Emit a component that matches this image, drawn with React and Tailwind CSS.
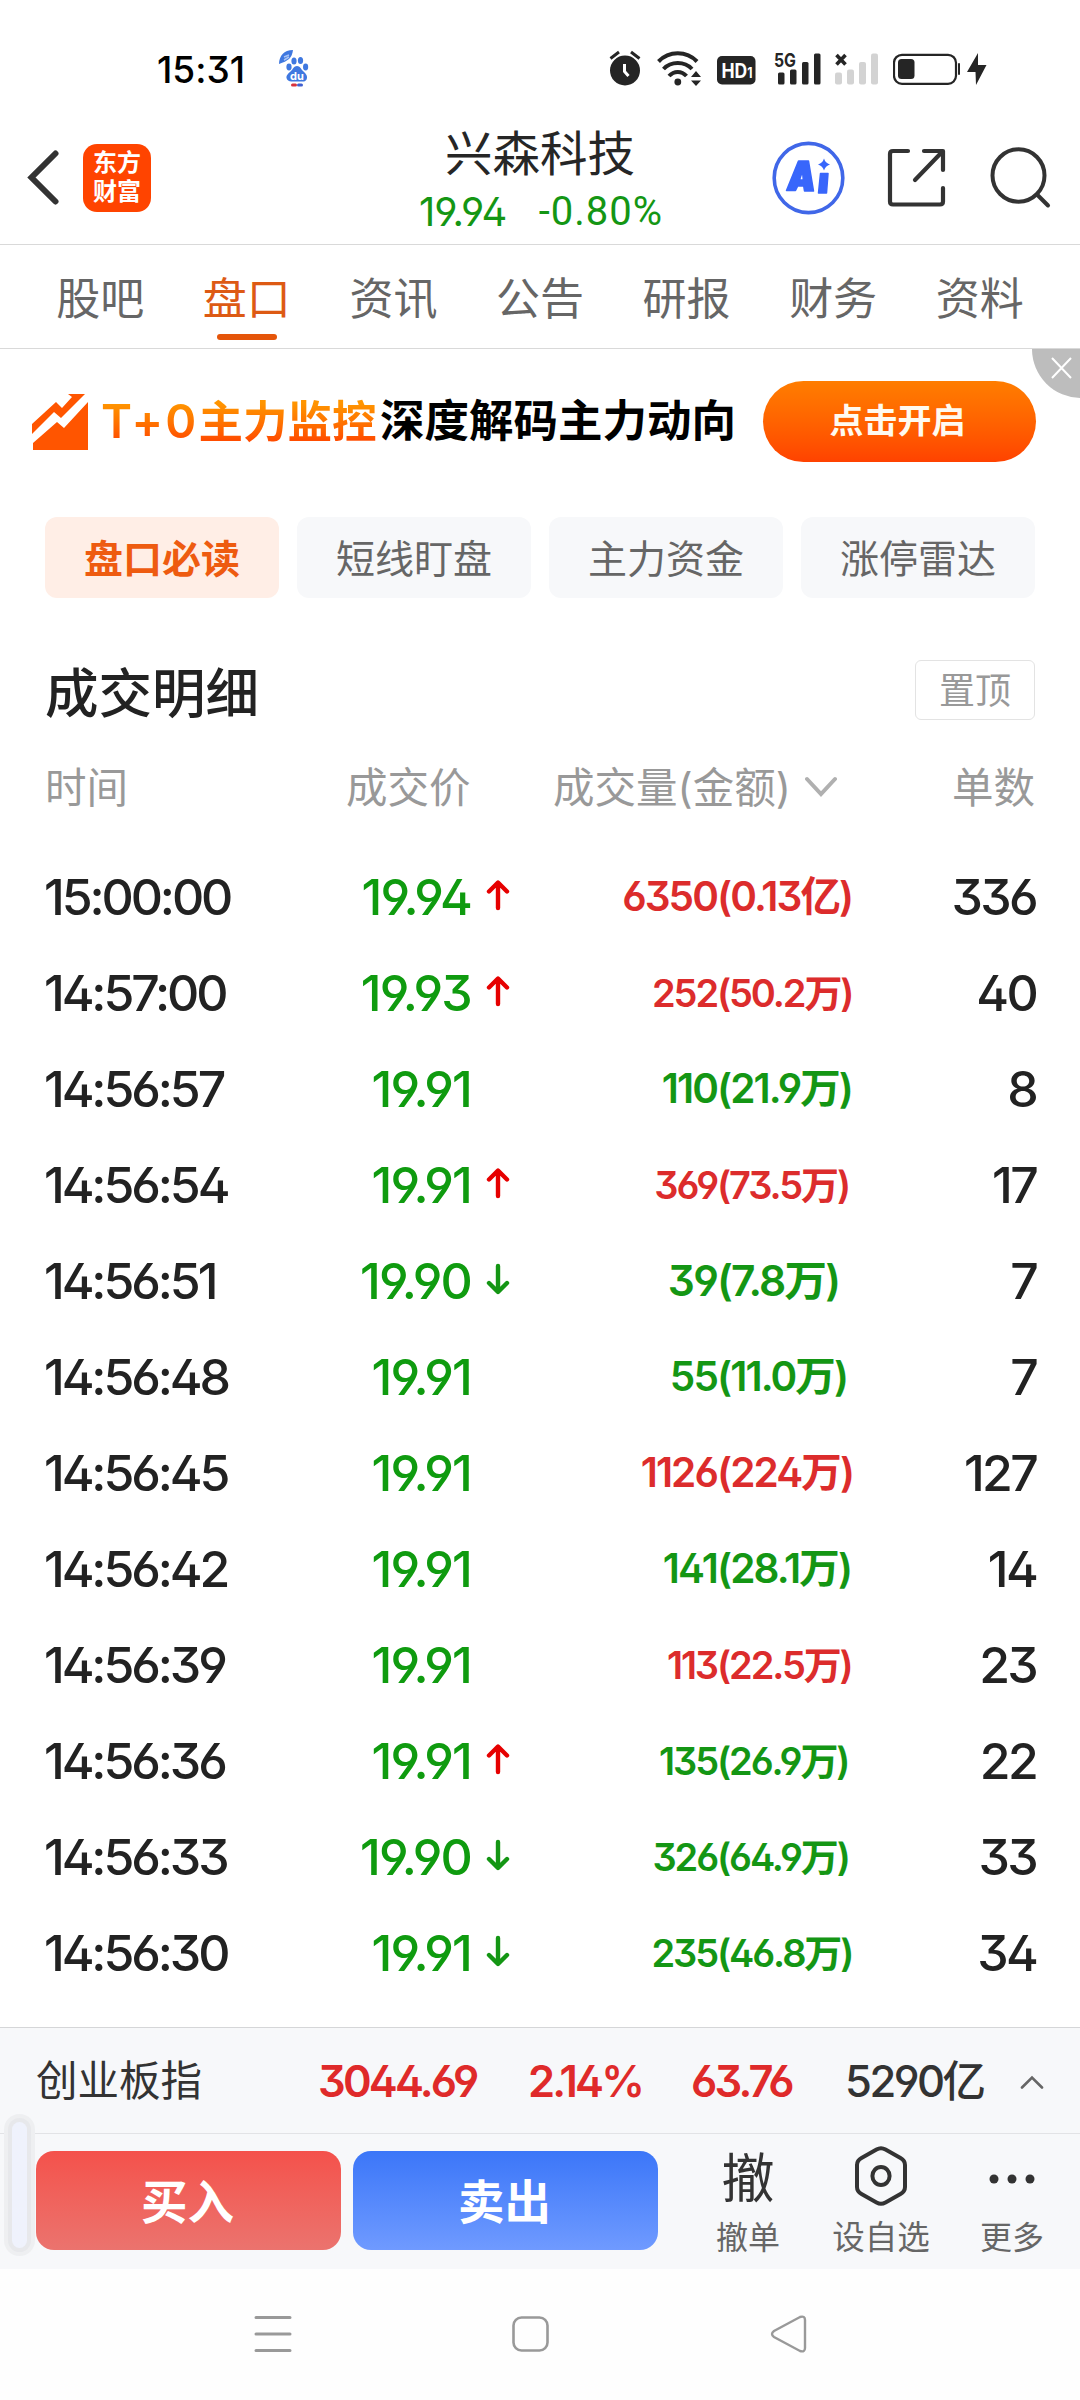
import React, { useState } from 'react';

const tabs = ['股吧', '盘口', '资讯', '公告', '研报', '财务', '资料'];

const pills = ['盘口必读', '短线盯盘', '主力资金', '涨停雷达'];

const trades = [
  { time: '15:00:00', price: '19.94', dir: 'up', volume: '6350', amount: '(0.13亿)', size: 'md', side: 'buy', count: 336 },
  { time: '14:57:00', price: '19.93', dir: 'up', volume: '252', amount: '(50.2万)', size: 'sm', side: 'buy', count: 40 },
  { time: '14:56:57', price: '19.91', dir: '', volume: '110', amount: '(21.9万)', size: 'md', side: 'sell', count: 8 },
  { time: '14:56:54', price: '19.91', dir: 'up', volume: '369', amount: '(73.5万)', size: 'sm', side: 'buy', count: 17 },
  { time: '14:56:51', price: '19.90', dir: 'down', volume: '39', amount: '(7.8万)', size: 'lg', side: 'sell', count: 7 },
  { time: '14:56:48', price: '19.91', dir: '', volume: '55', amount: '(11.0万)', size: 'md', side: 'sell', count: 7 },
  { time: '14:56:45', price: '19.91', dir: '', volume: '1126', amount: '(224万)', size: 'md', side: 'buy', count: 127 },
  { time: '14:56:42', price: '19.91', dir: '', volume: '141', amount: '(28.1万)', size: 'md', side: 'sell', count: 14 },
  { time: '14:56:39', price: '19.91', dir: '', volume: '113', amount: '(22.5万)', size: 'sm', side: 'buy', count: 23 },
  { time: '14:56:36', price: '19.91', dir: 'up', volume: '135', amount: '(26.9万)', size: 'sm', side: 'sell', count: 22 },
  { time: '14:56:33', price: '19.90', dir: 'down', volume: '326', amount: '(64.9万)', size: 'sm', side: 'sell', count: 33 },
  { time: '14:56:30', price: '19.91', dir: 'down', volume: '235', amount: '(46.8万)', size: 'sm', side: 'sell', count: 34 }
];

const volumeSizes = {
  sm: 'text-[38px] tracking-[-2.1px]',
  md: 'text-[40.500px] tracking-[-1.9px]',
  lg: 'text-[42.500px] tracking-[-1.8px]'
};

const StatusBar = () => (
  <div className="h-[110px] pt-[49px] flex items-start">
    <span className="ml-[157px] w-[122px] text-[37px] leading-[42px] font-medium text-black">15:31</span>
    <svg width="30" height="40" viewBox="0 0 30 40" className="shrink-0">
      <path d="M0 15C0 7 5 1 14 1C13 9 9 12 0 15Z" fill="#3f78e0" />
      <path d="M5 8l5-2M5 11l5-3" stroke="#a9c4f5" strokeWidth="1.5" />
      <ellipse cx="15" cy="12" rx="2.6" ry="3.6" fill="#3f78e0" />
      <ellipse cx="21.5" cy="11.5" rx="2.6" ry="3.6" fill="#3f78e0" />
      <ellipse cx="10" cy="18" rx="2.6" ry="3.4" fill="#3f78e0" />
      <ellipse cx="26.6" cy="18" rx="2.6" ry="3.4" fill="#3f78e0" />
      <path d="M18 17c3 0 4 3 6 5s4.500 4 4 7c-.5 3-3 4-5.500 3.500h-9c-3 .5-5.500-1-6-3.500c-.5-3 2.500-5 4.500-7s3-5 6-5z" fill="#3f78e0" />
      <text x="18" y="30.500" fontSize="11" fontWeight="700" textAnchor="middle" fill="#fff">du</text>
      <rect x="12" y="34.500" width="6" height="3" rx="1.500" fill="#d8333d" />
      <rect x="18" y="34.500" width="6" height="3" rx="1.500" fill="#3f5fd0" />
    </svg>
    <div className="ml-[300px] flex items-start text-[#252525]">
      {/* alarm */}
      <svg width="34" height="40" viewBox="0 0 34 40" fill="currentColor">
        <circle cx="16" cy="21.500" r="15" />
        <path d="M1.500 9.500l8.500-6.500M30.500 9.500l-8.500-6.500" stroke="currentColor" strokeWidth="3" />
        <path d="M15.500 15v7.500l4 4.500" stroke="#fff" strokeWidth="3" fill="none" />
      </svg>
      {/* wifi */}
      <svg width="46" height="40" viewBox="0 0 46 40" className="ml-[14px]" fill="none" stroke="currentColor" strokeWidth="4">
        <path d="M1.500 12.500C12 1.500 29.500 1.500 40 12.500" />
        <path d="M6.500 20C14 12 27.500 12 35 20" />
        <path d="M12 27C17 21.500 24.500 21.500 29.500 27" />
        <circle cx="20.800" cy="33" r="3.400" fill="currentColor" stroke="none" />
        <path d="M34 28l5-6 5 6zM34 31.500l5 5.500 5-5.500z" fill="currentColor" stroke="none" />
      </svg>
      {/* HD */}
      <svg width="39" height="40" viewBox="0 0 39 40" className="ml-[14px]">
        <rect x="0" y="7" width="38.500" height="28.500" rx="5" fill="currentColor" />
        <text x="4.500" y="28.500" fontSize="20" fontWeight="700" textLength="31" lengthAdjust="spacingAndGlyphs" fill="#fff">HD<tspan fontSize="14">1</tspan></text>
      </svg>
      {/* 5G signal */}
      <svg width="48" height="40" viewBox="0 0 48 40" className="ml-[18px]" fill="currentColor">
        <text x="0" y="17.500" fontSize="19" fontWeight="700" textLength="22" lengthAdjust="spacingAndGlyphs">5G</text>
        <rect x="4" y="23.500" width="6.500" height="12" rx="1.500" />
        <rect x="16" y="20.500" width="6.500" height="15" rx="1.500" />
        <rect x="28" y="13" width="6.500" height="22.500" rx="1.500" />
        <rect x="40" y="4.500" width="6.500" height="31" rx="1.500" />
      </svg>
      {/* no sim signal */}
      <svg width="44" height="40" viewBox="0 0 44 40" className="ml-[13px]" fill="#d3d3d3">
        <path d="M1.500 6l9 9.500M10.500 6l-9 9.500" stroke="#252525" strokeWidth="3.600" />
        <rect x="0" y="23.500" width="7" height="12" rx="2" />
        <rect x="12" y="20.500" width="7" height="15" rx="2" />
        <rect x="24" y="13" width="7" height="22.500" rx="2" />
        <rect x="36" y="4.500" width="7" height="31" rx="2" />
      </svg>
      {/* battery */}
      <svg width="68" height="40" viewBox="0 0 68 40" className="ml-[14px]" fill="currentColor">
        <rect x="1" y="5.800" width="62" height="29" rx="8" fill="none" stroke="currentColor" strokeWidth="2.200" />
        <rect x="5" y="10" width="16.500" height="20" rx="3.500" />
        <rect x="65" y="14" width="2" height="12" rx="1" />
      </svg>
      <svg width="20" height="40" viewBox="0 0 20 40" className="ml-[6px]" fill="currentColor">
        <path d="M11 4L0 23h8.500L9 36L19.500 16H11z" />
      </svg>
    </div>
  </div>
);

const Header = () => (
  <div className="h-[135px] border-b border-[#d9d9d9] flex items-start">
    <svg width="32" height="58" viewBox="0 0 32 58" className="ml-[27px] mt-[38px]" fill="none" stroke="#333" strokeWidth="6" strokeLinecap="round" strokeLinejoin="miter">
      <path d="M28.500 5.500L4.500 29.500L28.500 53.500" />
    </svg>
    <div className="ml-[24px] mt-[34px] w-[68px] h-[68px] rounded-[14px] bg-[#ff4400] text-white text-[24px] leading-[29px] font-bold text-center pt-[4px]">
      东方<br />财富
    </div>
    <div className="ml-[257px] w-[264px] flex flex-col items-center">
      <div className="mt-[9px] text-[47.500px] leading-[70px] text-[#262626] whitespace-nowrap">兴森科技</div>
      <div className="mt-[-1px] w-full pl-[11px] flex justify-between text-[40px] leading-[48px] tracking-[-1px] text-[#149614]">
        <span>19.94</span>
        <span className="mr-[9px] font-[Roboto] tracking-[1px]">-0.80%</span>
      </div>
    </div>
    <svg width="73" height="76" viewBox="0 0 73 76" className="ml-[100px] mt-[30px]" fill="#3866fb">
      <ellipse cx="36.500" cy="38" rx="34.300" ry="34.600" fill="none" stroke="#4067e8" strokeWidth="3.600" />
      <path d="M26.500 21h10l5 30h-9l-.8-5h-6l-2.200 4.500h-9zM30.500 31l-3 9h3.800z" fillRule="evenodd" stroke="#3866fb" strokeWidth="1.500" strokeLinejoin="round" />
      <path d="M48.500 33.500h7.500l-1.500 19.500h-8z" stroke="#3866fb" strokeWidth="1.500" strokeLinejoin="round" />
      <path d="M52 18.500q1.300 4.500 6 6q-4.700 1.500-6 6q-1.300-4.500-6-6q4.700-1.500 6-6z" />
    </svg>
    <svg width="60" height="62" viewBox="0 0 60 62" className="ml-[42px] mt-[37px]" fill="none" stroke="#333" strokeWidth="4.200" strokeLinecap="round" strokeLinejoin="round">
      <path d="M21 4H6Q3 4 3 7V54.500Q3 57.500 6 57.500H53Q56 57.500 56 54.500V41" />
      <path d="M37 4H56V23M55 5L28 33" />
    </svg>
    <svg width="62" height="64" viewBox="0 0 62 64" className="ml-[43px] mt-[36px]" fill="none" stroke="#333" strokeWidth="4" strokeLinecap="round">
      <ellipse cx="28.500" cy="29.500" rx="26" ry="26.200" />
      <path d="M47.500 49L58 59.500" />
    </svg>
  </div>
);

const Banner = () => (
  <div className="relative h-[147px] flex items-start overflow-hidden">
    <svg width="56" height="58" viewBox="0 0 56 58" className="ml-[32px] mt-[44px]" fill="#ff5500">
      <path d="M0 31L24 9l6 6L40 4l-4-3h17L29 25l-7-6L0 41z" />
      <path d="M1 50L25 29l7 6L56 9v48H1z" />
    </svg>
    <div className="ml-[13px] mt-[42px] flex text-[44.500px] leading-[60px] font-bold whitespace-nowrap">
      <span className="w-[279px] bg-gradient-to-b from-[#ff9500] from-20% to-[#ff4d00] to-80% bg-clip-text text-transparent"><span className="text-[47px] font-semibold tracking-[2.200px]">T+0</span>主力监控</span>
      <span className="text-black">深度解码主力动向</span>
    </div>
    <button className="absolute left-[763px] top-[32px] w-[273px] h-[81px] pr-[4px] pb-[3px] rounded-full bg-gradient-to-b from-[#ff7d00] to-[#ff4200] text-[34px] font-bold text-[#fffaf0]">
      点击开启
    </button>
    <div className="absolute left-[1032px] top-[-49px] w-[98px] h-[98px] rounded-full bg-[#bdbdbd]">
      <svg width="22" height="22" viewBox="0 0 22 22" className="absolute left-[19px] top-[57px]" stroke="#fff" strokeWidth="2">
        <path d="M1 1l19 20M20 1L1 21" />
      </svg>
    </div>
  </div>
);

const Arrow = ({ dir }) => (
  <svg width="24" height="32" viewBox="0 0 24 32" className="ml-[15px] mt-[-5px] shrink-0" fill="none" strokeWidth="4.400" strokeLinecap="round" strokeLinejoin="round">
    {dir === 'up' && <path d="M12 29V4M3 12.500L12 3.500L21 12.500" stroke="#e60000" />}
    {dir === 'down' && <path d="M12 3V28M3 20L12 29L21 20" stroke="#149614" />}
  </svg>
);

const TradeTable = () => (
  <div className="px-[45px]">
    <div className="flex items-center justify-between h-[60px]">
      <h2 className="text-[53.500px] leading-[64px] font-medium text-[#222] pt-[7px]">成交明细</h2>
      <button className="w-[120px] h-[60px] pt-[2px] rounded-[6px] border border-[#e3e3e3] text-[36px] leading-[50px] text-[#999]">置顶</button>
    </div>
    <div className="mt-[37px] h-[62px] flex items-center text-[41.500px] text-[#999]">
      <span className="w-[301px]">时间</span>
      <span className="w-[207px]">成交价</span>
      <span className="w-[252px]">成交量(金额)</span>
      <svg width="32" height="22" viewBox="0 0 32 22" className="mr-auto mt-[-3px]" fill="none" stroke="#b0b0b0" strokeWidth="4" strokeLinecap="round">
        <path d="M2 3L16 18L30 3" />
      </svg>
      <span>单数</span>
    </div>
    <div className="mt-[30px]">
      {trades.map((trade) => (
        <div key={trade.time} className="h-[96px] flex items-center text-[50px] font-medium tracking-[-1.8px] text-[#222]">
          <span className="w-[261px] ml-[-1px] tracking-[-3.1px]">{trade.time}</span>
          <span className="w-[166px] text-right text-[#0f9b0f]">{trade.price}</span>
          <Arrow dir={trade.dir} />
          <div className={`flex font-semibold whitespace-nowrap ${volumeSizes[trade.size]} ${trade.side === 'buy' ? 'text-[#dc2c2c]' : 'text-[#149614]'}`}>
            <span className="w-[207px] text-right">{trade.volume}</span>
            <span>{trade.amount}</span>
          </div>
          <span className="ml-auto mr-[-1px] tracking-[-2.700px]">{trade.count}</span>
        </div>
      ))}
    </div>
  </div>
);

const BottomPanel = () => (
  <div className="relative mt-[26px] h-[242px] bg-[#f7f8fa] border-t border-[#d5d6d8]">
    <div className="h-[106px] pt-[2px] border-b border-[#e2e3e6] flex items-center text-[43.500px] font-semibold tracking-[-2.8px] text-[#df2a2a]">
      <span className="ml-[36px] w-[282px] text-[41.500px] font-normal tracking-normal text-[#333]">创业板指</span>
      <span className="w-[210px]">3044.69</span>
      <span className="w-[163px]">2.14%</span>
      <span className="w-[154px]">63.76</span>
      <span className="w-[175px] tracking-[-2.500px] font-medium text-[#333]">5290亿</span>
      <svg width="24" height="14" viewBox="0 0 24 14" fill="none" stroke="#666" strokeWidth="2.600" strokeLinecap="round">
        <path d="M2 12.500L12 2.500L22 12.500" />
      </svg>
    </div>
    <div className="flex pl-[36px] pt-[17px]">
      <button className="w-[305px] h-[99px] pr-[2px] pt-[3px] rounded-[18px] bg-gradient-to-b from-[#f4514b] to-[#eb736e] text-[46.500px] leading-[60px] font-bold text-white">买入</button>
      <button className="ml-[12px] w-[305px] h-[99px] pr-[2px] pt-[3px] rounded-[18px] bg-gradient-to-b from-[#3b76f8] to-[#6f9aff] text-[46.500px] leading-[60px] font-bold text-white">卖出</button>
      <div className="ml-[46px] w-[88px] mt-[-9px] flex flex-col items-center text-[#666] text-[32px] leading-[40px]">
        <span className="h-[76px] text-[53px] leading-[74px] text-[#333]">撤</span>
        撤单
      </div>
      <div className="ml-[34px] w-[110px] mt-[-9px] flex flex-col items-center text-[#666] text-[32.500px] leading-[40px]">
        <svg width="56" height="64" viewBox="0 0 56 64" className="mt-[2px] mb-[10px]" fill="none" stroke="#333" strokeWidth="4">
          <path d="M23.500 5.500Q28 3 32.500 5.500L47.500 14Q52 16.500 52 21V43Q52 47.500 47.500 50L32.500 58.500Q28 61 23.500 58.500L8.500 50Q4 47.500 4 43V21Q4 16.500 8.500 14Z" />
          <ellipse cx="28" cy="32" rx="8.600" ry="9" />
        </svg>
        设自选
      </div>
      <div className="ml-[31px] w-[90px] mt-[-9px] flex flex-col items-center text-[#666] text-[32px] leading-[40px]">
        <svg width="48" height="12" viewBox="0 0 48 12" className="mt-[31px] mb-[33px]" fill="#333">
          <circle cx="6" cy="6" r="4.500" />
          <circle cx="24" cy="6" r="4.500" />
          <circle cx="42" cy="6" r="4.500" />
        </svg>
        更多
      </div>
    </div>
    {/* edge gesture handle */}
    <div className="absolute left-[12px] top-[94px] w-[15px] h-[126px] rounded-full bg-[#eff2fc] ring-4 ring-[#e7e8eb] shadow-[0_0_0_8px_#eeeff1]" />
  </div>
);

const NavBar = () => (
  <div className="h-[131px] flex items-start pt-[45px] bg-[#fefefe]">
    <svg width="38" height="40" viewBox="0 0 38 40" className="ml-[254px]" stroke="#999" strokeWidth="3" strokeLinecap="round">
      <path d="M2 3.500H36M2 20H36M2 36.500H36" />
    </svg>
    <svg width="40" height="40" viewBox="0 0 40 40" className="ml-[218px]" fill="none" stroke="#999" strokeWidth="2.600">
      <rect x="3.500" y="3.500" width="34" height="33" rx="8" />
    </svg>
    <svg width="38" height="40" viewBox="0 0 38 40" className="ml-[219px]" fill="none" stroke="#999" strokeWidth="2.400">
      <path d="M31 3Q36 1.500 36 6V34Q36 38.500 31 37L5 23Q1 20 5 17Z" />
    </svg>
  </div>
);

const StockDetailApp = () => {
  const [activeTab, setActiveTab] = useState('盘口');
  const [activePill, setActivePill] = useState('盘口必读');

  return (
    <div className="w-[1080px] h-[2400px] overflow-hidden bg-white font-[Inter,'Noto_Sans_CJK_SC',sans-serif] [font-feature-settings:'calt'_0,'cv09'_1,'ss01'_1]">
      <StatusBar />
      <Header />

      {/* Tabs */}
      <div className="h-[104px] px-[27px] border-b border-[#d9d9d9] grid grid-cols-7">
        {tabs.map((tab) => (
          <button
            key={tab}
            onClick={() => setActiveTab(tab)}
            className={`flex flex-col items-center text-[44px] leading-[64px] pt-[22px] ${activeTab === tab ? 'text-[#dd5a14]' : 'text-[#666]'}`}
          >
            {tab}
            {activeTab === tab && <span className="mt-[3px] w-[60px] h-[6px] rounded-full bg-[#e5550a]" />}
          </button>
        ))}
      </div>

      <Banner />

      {/* Pills */}
      <div className="mt-[21px] px-[45px] flex gap-[18px]">
        {pills.map((pill) => (
          <button
            key={pill}
            onClick={() => setActivePill(pill)}
            className={`w-[234px] h-[81px] pt-[3px] rounded-xl text-[39px] ${activePill === pill ? 'bg-[#ffeee6] text-[#ee5b10] font-bold' : 'bg-[#f7f8fa] text-[#666]'}`}
          >
            {pill}
          </button>
        ))}
      </div>

      <div className="h-[62px]" />
      <TradeTable />
      <BottomPanel />
      <NavBar />
    </div>
  );
};

export default StockDetailApp;
